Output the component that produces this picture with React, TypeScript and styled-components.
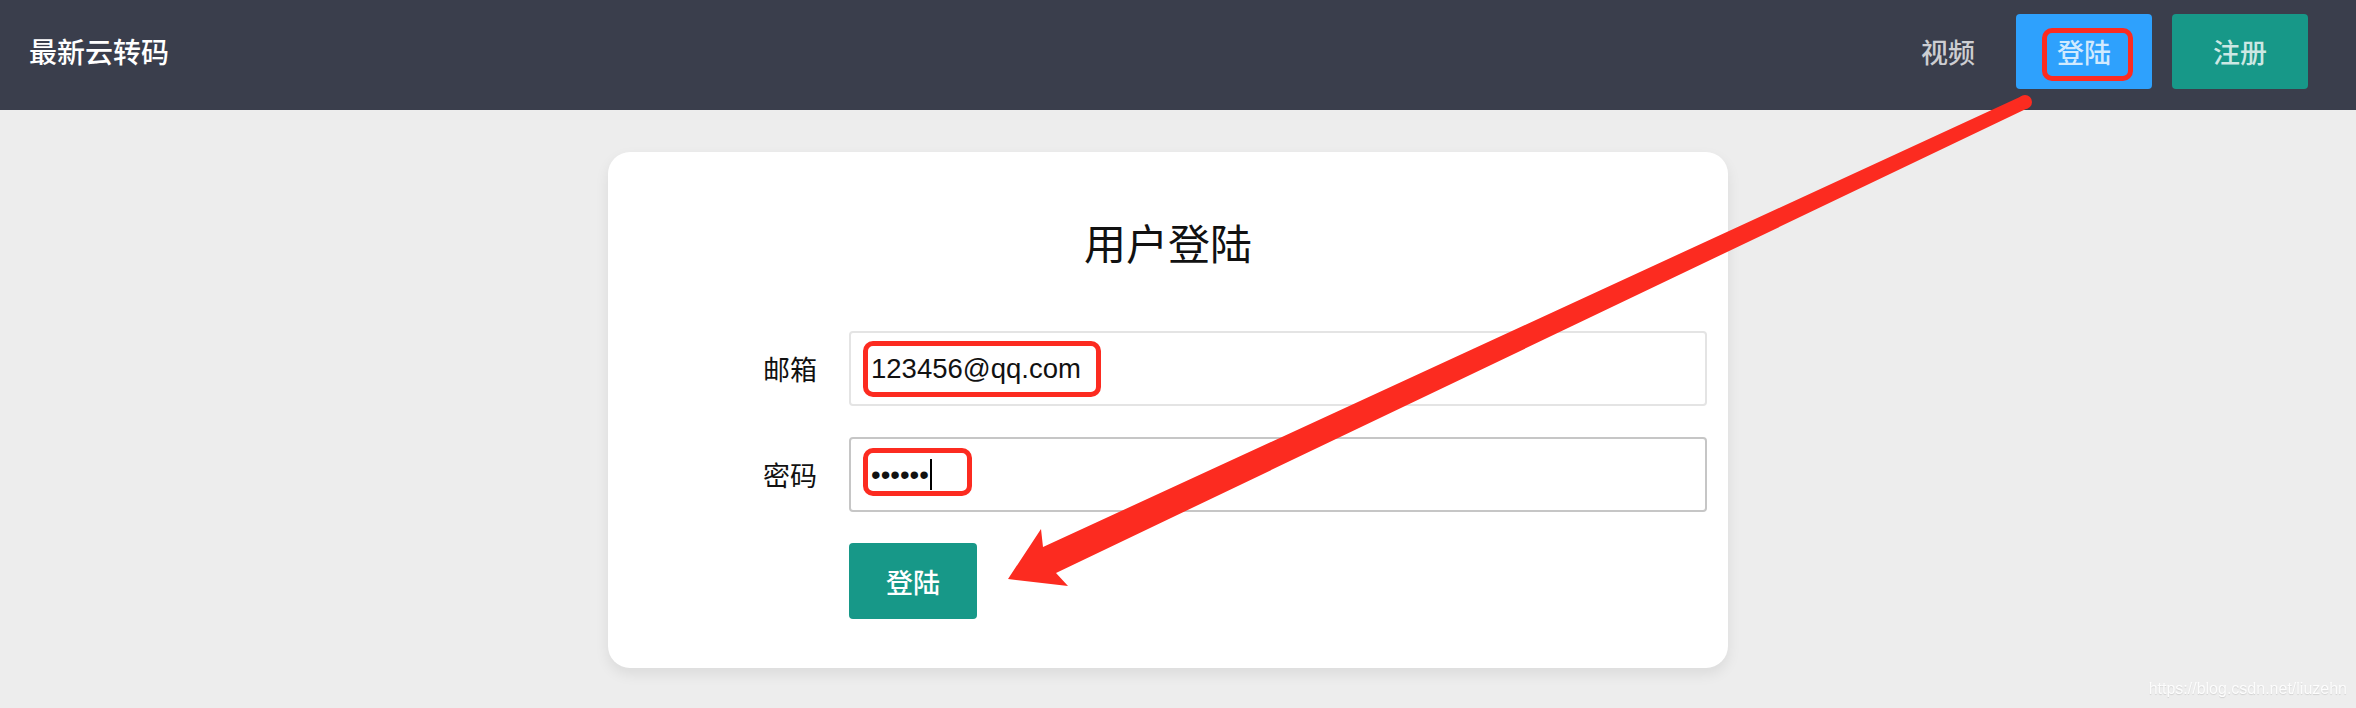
import styled, { createGlobalStyle } from 'styled-components';

const GlobalStyle = createGlobalStyle`
  html, body {
    margin: 0;
    padding: 0;
  }
  body {
    background: #ededed;
    font-family: "Noto Sans CJK SC", "Liberation Sans", sans-serif;
    overflow: hidden;
  }
`;

const Page = styled.div`
  position: relative;
  width: 100%;
  height: 708px;
`;

const Header = styled.header`
  display: flex;
  align-items: flex-start;
  justify-content: space-between;
  height: 110px;
  box-sizing: border-box;
  padding: 14px 48px 0 29px;
  background: #3a3e4c;
`;

const Brand = styled.div`
  color: #fff;
  font-size: 28px;
  font-weight: 500;
  line-height: 75px;
`;

const Nav = styled.nav`
  display: flex;
  align-items: center;
  gap: 20px;
`;

const NavLink = styled.a`
  color: rgba(255, 255, 255, 0.75);
  font-size: 27px;
  font-weight: 500;
  line-height: 75px;
  margin-right: 21px;
  text-decoration: none;
`;

const NavButton = styled.button<{ $tone: 'blue' | 'teal' }>`
  position: relative;
  width: 136px;
  height: 75px;
  padding: 0;
  border: 0;
  border-radius: 4px;
  background: ${p => (p.$tone === 'blue' ? '#2ea1fd' : '#179888')};
  color: rgba(255, 255, 255, 0.78);
  font-family: inherit;
  font-size: 27px;
  font-weight: 500;
`;

// 截图上的红色标注框
const Mark = styled.span<{ $left: number; $top: number; $w: number; $h: number }>`
  position: absolute;
  left: ${p => p.$left}px;
  top: ${p => p.$top}px;
  width: ${p => p.$w}px;
  height: ${p => p.$h}px;
  box-sizing: border-box;
  border: 5px solid #fc2b20;
  border-radius: 10px;
  pointer-events: none;
`;

// 截图里停在密码末尾的光标
const Caret = styled.span`
  position: absolute;
  left: 81px;
  top: 22px;
  width: 2px;
  height: 31px;
  background: #000;
  pointer-events: none;
`;

const Main = styled.main`
  display: flex;
  justify-content: center;
  padding: 42px 20px 0 0;
`;

const Card = styled.section`
  width: 1120px;
  height: 516px;
  box-sizing: border-box;
  padding: 60px 21px 0 0;
  background: #fff;
  border-radius: 22px;
  box-shadow: 0 6px 14px rgba(0, 0, 0, 0.08);
`;

const Title = styled.h1`
  margin: 0 0 60px;
  padding-left: 21px;
  text-align: center;
  font-size: 42px;
  font-weight: 400;
  line-height: 59px;
  color: #111;
`;

const Form = styled.form`
  display: grid;
  grid-template-columns: 209px 858px;
  column-gap: 32px;
  row-gap: 31px;
  align-items: center;
`;

const Label = styled.label`
  text-align: right;
  font-size: 27px;
  color: #111;
`;

const Field = styled.div`
  position: relative;
`;

const Input = styled.input`
  display: block;
  box-sizing: border-box;
  width: 100%;
  height: 75px;
  padding: 0 20px;
  border: 2px solid #e4e4e4;
  border-radius: 4px;
  font-family: "Liberation Sans", sans-serif;
  font-size: 27.5px;
  color: #111;
  caret-color: transparent;
  outline: none;
  &:focus {
    border-color: #c6c6c6;
  }
`;

const Submit = styled.button`
  grid-column: 2;
  width: 128px;
  height: 76px;
  padding: 0;
  border: 0;
  border-radius: 4px;
  background: #179888;
  color: #fff;
  font-family: inherit;
  font-size: 27px;
  font-weight: 500;
`;

const ArrowLayer = styled.svg`
  position: absolute;
  top: 0;
  left: 0;
  pointer-events: none;
`;

const Watermark = styled.div`
  position: absolute;
  right: 9px;
  bottom: 9px;
  font-family: "Liberation Sans", sans-serif;
  font-size: 16px;
  line-height: 20px;
  color: rgba(255, 255, 255, 0.9);
  text-shadow: 0 1px 1px rgba(0, 0, 0, 0.12);
`;

function Arrow() {
  return (
    <ArrowLayer width="2356" height="708" viewBox="0 0 2356 708">
      <polygon
        fill="#fc2b20"
        points="1008,579 1041,529 1043,547 2022,96 2028,108 1056,573 1068,586"
      />
      <circle cx="2025" cy="102" r="7" fill="#fc2b20" />
    </ArrowLayer>
  );
}

function App() {
  return (
    <Page>
      <GlobalStyle />
      <Header>
        <Brand>最新云转码</Brand>
        <Nav>
          <NavLink href="#">视频</NavLink>
          <NavButton $tone="blue">
            登陆
            <Mark $left={26} $top={14} $w={91} $h={53} />
          </NavButton>
          <NavButton $tone="teal">注册</NavButton>
        </Nav>
      </Header>
      <Main>
        <Card>
          <Title>用户登陆</Title>
          <Form onSubmit={e => e.preventDefault()}>
            <Label htmlFor="email">邮箱</Label>
            <Field>
              <Input id="email" type="text" defaultValue="123456@qq.com" />
              <Mark $left={14} $top={10} $w={238} $h={56} />
            </Field>
            <Label htmlFor="pwd">密码</Label>
            <Field>
              <Input id="pwd" type="password" defaultValue="123456" autoFocus />
              <Caret />
              <Mark $left={14} $top={11} $w={109} $h={48} />
            </Field>
            <Submit type="submit">登陆</Submit>
          </Form>
        </Card>
      </Main>
      <Arrow />
      <Watermark>https://blog.csdn.net/liuzehn</Watermark>
    </Page>
  );
}

export default App;
